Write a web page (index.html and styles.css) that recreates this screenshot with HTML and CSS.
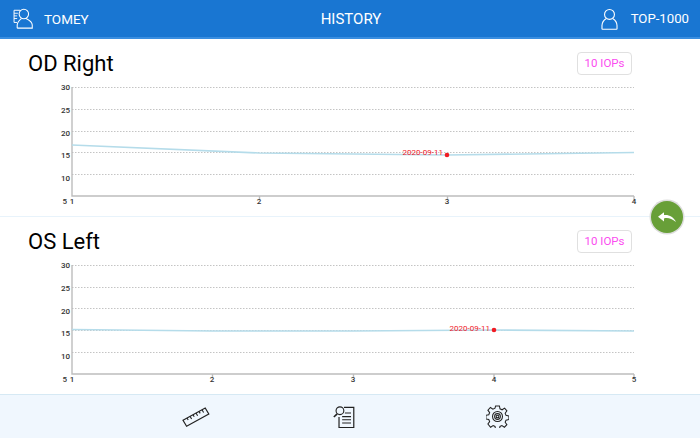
FILE: index.html
```html
<!DOCTYPE html>
<html>
<head>
  <title>History</title>
  <link rel="stylesheet" href="styles.css">
</head>
<body>
  <div class="app">
    <div class="header">
      <div class="header-side">
        <svg class="icon-user-doc" viewBox="0 0 24 24" fill="none" stroke="currentColor">
          <path d="M4.6 16.5H1.2V2.6H8" stroke-width="1.1"/>
          <path d="M1.2 6h4.4M1.2 9h3.6M1.2 12h3.6" stroke-width="1"/>
          <circle cx="12.4" cy="6.8" r="5.4" stroke-width="1.2"/>
          <path d="M4.8 23V19.5C4.8 16 7.6 13.8 9.6 12M15 12C18.6 13.8 22 16 22 19.5V23H4.8" stroke-width="1.2"/>
        </svg>
        <span>TOMEY</span>
      </div>
      <div class="header-title">HISTORY</div>
      <div class="header-side header-right">
        <svg class="icon-user" viewBox="0 0 18 24" fill="none" stroke="currentColor" stroke-width="1.2">
          <circle cx="9" cy="7" r="5.4"/>
          <path d="M5.6 11.4C3 13 .8 15.6 .8 19.2V22.6C.8 23 1 23.2 1.4 23.2H16.6C17 23.2 17.2 23 17.2 22.6V19.2C17.2 15.6 15 13 12.4 11.4"/>
        </svg>
        <span class="device-name">TOP-1000</span>
      </div>
    </div>

    <div class="eye-section">
      <div class="eye-head">
        <h2 class="eye-title">OD Right</h2>
        <div class="iop-badge">10 IOPs</div>
      </div>
      <svg class="chart" viewBox="0 -6 700 132" width="700" height="132">
        <g class="grid">
          <path d="M72 2.5H634M72 24.5H634M72 46.5H634M72 67.5H634M72 89.5H634"/>
        </g>
        <path class="axis" d="M72 2V111H634M259.5 111V115M447.5 111V115M634 111V115"/>
        <g class="y-labels">
          <text x="70" y="5">30</text>
          <text x="70" y="28">25</text>
          <text x="70" y="51">20</text>
          <text x="70" y="73">15</text>
          <text x="70" y="96">10</text>
          <text x="67" y="119">5</text>
        </g>
        <g class="x-labels">
          <text x="72" y="119">1</text>
          <text x="259" y="119">2</text>
          <text x="447" y="119">3</text>
          <text x="634" y="119">4</text>
        </g>
        <polyline class="line" points="72,60 259,68 447,70 634,67.5"/>
        <text class="point-label" x="443" y="70">2020-09-11</text>
        <circle class="point" cx="447" cy="70" r="2.3"/>
      </svg>
    </div>

    <div class="eye-section">
      <div class="eye-head">
        <h2 class="eye-title">OS Left</h2>
        <div class="iop-badge">10 IOPs</div>
      </div>
      <svg class="chart" viewBox="0 -6 700 132" width="700" height="132">
        <g class="grid">
          <path d="M72 2.5H634M72 24.5H634M72 45.5H634M72 67.5H634M72 89.5H634"/>
        </g>
        <path class="axis" d="M72 2V111H634M212.5 111V115M353.5 111V115M494 111V115M634 111V115"/>
        <g class="y-labels">
          <text x="70" y="5">30</text>
          <text x="70" y="28">25</text>
          <text x="70" y="51">20</text>
          <text x="70" y="73">15</text>
          <text x="70" y="96">10</text>
          <text x="67" y="119">5</text>
        </g>
        <g class="x-labels">
          <text x="72" y="119">1</text>
          <text x="212" y="119">2</text>
          <text x="353" y="119">3</text>
          <text x="494" y="119">4</text>
          <text x="634" y="119">5</text>
        </g>
        <polyline class="line" points="72,66.5 212,68 353,68 494,67 634,68"/>
        <text class="point-label" x="490" y="67.5">2020-09-11</text>
        <circle class="point" cx="494" cy="67" r="2.3"/>
      </svg>
    </div>

    <div class="footer">
      <svg class="icon-ruler" viewBox="0 0 28 20" fill="none" stroke="currentColor" stroke-width="1.1">
        <path d="M1 13.2L23.2 1L26.8 7L4.6 19.2Z" stroke-width="1.2"/>
        <path d="M5 11l1.2 2M8 9.3l1.6 2.8M11 7.7l1.2 2M14 6l1.6 2.8M17 4.4l1.2 2M20 2.7l1.6 2.8"/>
      </svg>
      <svg class="icon-report" viewBox="0 0 24 26" fill="none" stroke="currentColor">
        <path d="M12 2.6H22.6V24.4H6.6V13" stroke-width="1.3"/>
        <circle cx="7.6" cy="6.2" r="4.2" stroke-width="1.2"/>
        <path d="M4.6 9.6L1 13" stroke-width="1.8"/>
        <path d="M10 12.6H19.6M10 16H19.6M10 19.4H19.6M13 8.6H19.6" stroke-width="1.1"/>
      </svg>
      <svg class="icon-gear" viewBox="0 0 24 24" fill="none" stroke="currentColor" stroke-width="1.1">
        <path d="M10 1h4l.6 3 2.2 1 2.6-1.7 2.4 2.8-1.8 2.5.9 2.2 3 .6v3.8l-3 .6-.9 2.2 1.8 2.5-2.6 2.7-2.6-1.7-2 .9-.6 3h-4l-.6-3-2-.9-2.6 1.7L2 19.8l1.8-2.5-.9-2.2-3-.6v-3.8l3-.6.9-2.2L2 5.4l2.6-2.8 2.6 1.7 2.2-1z"/>
        <circle cx="12" cy="12" r="5.2"/>
        <circle cx="12" cy="12" r="3"/>
        <circle cx="12" cy="12" r="1.4"/>
      </svg>
    </div>

    <div class="back-btn">
      <svg viewBox="0 0 18 10" width="18" height="10" fill="#fff">
        <path d="M6 .3L0 4.8L6 9.4V6.4C10 5.5 13.5 6.5 18 10C15.5 4.5 11 2.5 6 3Z"/>
      </svg>
    </div>
  </div>
</body>
</html>
```
FILE: styles.css
```css
:root {
  --primary-blue: #1976d2;
  --footer-bg: #f0f7fe;
  --line-blue: #d6e9f4;
  --text-primary: #000000;
}

body {
  margin: 0;
  background: #ffffff;
  font-family: Roboto, "Liberation Sans", sans-serif;
}

.app {
  position: relative;
  width: 700px;
  height: 438px;
  overflow: hidden;
}

.header {
  height: 37px;
  display: flex;
  align-items: center;
  justify-content: space-between;
  padding: 0 11px 0 13px;
  background: var(--primary-blue);
  border-bottom: 2px solid #3a8ee0;
  color: #ffffff;
  font-size: 13.5px;
}

.header-side {
  width: 180px;
  display: flex;
  align-items: center;
  gap: 10px;
}

.header-right {
  justify-content: flex-end;
  gap: 13px;
}

.device-name {
  font-size: 13.2px;
}

.header-title {
  font-size: 15px;
}

.icon-user-doc {
  width: 21px;
  height: 21px;
}

.icon-user {
  width: 17px;
  height: 22px;
}

.eye-section {
  height: 177px;
  border-bottom: 1px solid #e8f3fb;
}

.eye-section:last-of-type {
  border-bottom: none;
}

.eye-head {
  height: 32px;
  padding: 8px 68px 0 28px;
  display: flex;
  align-items: center;
  justify-content: space-between;
}

.eye-title {
  margin: 0;
  font-size: 22px;
  font-weight: 400;
  color: var(--text-primary);
}

.iop-badge {
  width: 53px;
  height: 21px;
  display: flex;
  align-items: center;
  justify-content: center;
  border: 1.5px solid #e0e0e0;
  border-radius: 4px;
  color: #fb4cf0;
  font-size: 11.5px;
}

.chart {
  display: block;
}

.grid path {
  fill: none;
  stroke: #c4c4c4;
  stroke-width: 1;
  stroke-dasharray: 1.5 1.5;
}

.axis {
  fill: none;
  stroke: #bdbdbd;
  stroke-width: 1.4;
}

.y-labels text {
  font-size: 8px;
  font-weight: 500;
  fill: #333333;
  text-anchor: end;
}

.x-labels text {
  font-size: 8px;
  font-weight: 500;
  fill: #333333;
  text-anchor: middle;
}

.line {
  fill: none;
  stroke: #b5dcea;
  stroke-width: 1.6;
}

.point {
  fill: #f01c24;
}

.point-label {
  font-size: 8px;
  fill: #f0202a;
  text-anchor: end;
}

.footer {
  position: absolute;
  left: 0;
  right: 0;
  bottom: 0;
  height: 43px;
  display: flex;
  align-items: center;
  border-top: 1px solid var(--line-blue);
  background: var(--footer-bg);
  color: #222222;
}

.icon-ruler {
  width: 28px;
  height: 20px;
  margin-left: 182px;
}

.icon-report {
  width: 24px;
  height: 24px;
  margin-left: 122px;
}

.icon-gear {
  width: 23px;
  height: 23px;
  margin-left: 130px;
}

.back-btn {
  position: absolute;
  left: 651px;
  top: 201px;
  width: 32px;
  height: 32px;
  display: flex;
  align-items: center;
  justify-content: center;
  border-radius: 50%;
  background: #689f38;
  box-shadow: 0 0 0 1.5px #dddddd;
}
```
